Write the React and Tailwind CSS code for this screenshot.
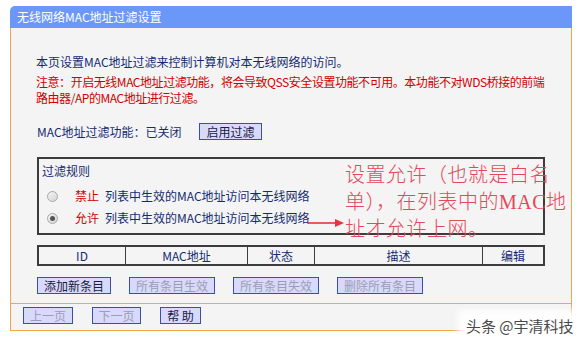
const FONT = { fontFamily: '"Noto Sans CJK SC", "Liberation Sans", sans-serif' }

function Btn({ children, disabled, w }) {
  return (
    <div
      className={`${w} h-[17px] flex items-center justify-center border border-[#3a4fa6] bg-[#d9d9fb] text-[12px] leading-none ${
        disabled ? 'text-[#9c9cb4]' : 'text-[#1a1a40]'
      }`}
    >
      {children}
    </div>
  )
}

function Radio({ checked }) {
  return (
    <span className="w-[11px] h-[11px] rounded-full border border-[#a8a8a8] bg-gradient-to-br from-[#f4f4f4] to-[#d6d6d6] flex items-center justify-center flex-shrink-0">
      {checked && <span className="w-[5px] h-[5px] rounded-full bg-[#555]" />}
    </span>
  )
}

export default function App() {
  return (
    <div className="relative w-[582px] h-[343px] bg-white overflow-hidden" style={FONT}>
      <div className="pt-[6px] pl-[10px] w-[572px]">
        {/* Title */}
        <div className="h-[22px] bg-[#6b97f8] rounded-tl-[5px] text-white text-[12px] leading-[22px] pl-[7px]">
          无线网络MAC地址过滤设置
        </div>

        <div className="bg-[#f4f4f4] border-x border-b border-[#f3a64c]">
          {/* Upper section */}
          <div className="pl-[25px] pr-[25px] pt-[26px] pb-[9px] border-b border-[#f3a64c] text-[12px]">
            <p className="leading-[16px] text-[#142c72] whitespace-nowrap">本页设置MAC地址过滤来控制计算机对本无线网络的访问。</p>
            <p className="mt-[4px] leading-[16px] text-[#d10000] whitespace-nowrap tracking-[-0.45px]">
              注意：开启无线MAC地址过滤功能，将会导致QSS安全设置功能不可用。本功能不对WDS桥接的前端
              <br />
              路由器/AP的MAC地址进行过滤。
            </p>

            <div className="mt-[17px] h-[17px] flex items-center text-[#142c72]">
              <span className="w-[163px] pl-[1px]">MAC地址过滤功能：已关闭</span>
              <Btn w="w-[63px]">启用过滤</Btn>
            </div>

            {/* Filter rules */}
            <div className="mt-[17px] ml-[1px] w-[508px] h-[78px] border-2 border-[#3c3c3c] pt-[4px]">
              <div className="pl-[3px] leading-[16px] text-[#142c72]">过滤规则</div>
              <div className="mt-[9px] h-[16px] flex items-center pl-[8px]">
                <Radio />
                <span className="ml-[17px] text-[#d10000]">禁止</span>
                <span className="ml-[6px] text-[#142c72]">列表中生效的MAC地址访问本无线网络</span>
              </div>
              <div className="mt-[6px] h-[16px] flex items-center pl-[8px]">
                <Radio checked />
                <span className="ml-[17px] text-[#d10000]">允许</span>
                <span className="ml-[6px] text-[#142c72]">列表中生效的MAC地址访问本无线网络</span>
              </div>
            </div>

            {/* Table header */}
            <div className="mt-[10px] ml-[1px] w-[508px] h-[21px] border-2 border-[#3c3c3c] grid grid-cols-[87px_122px_67px_168px_1fr] text-[#142c72] leading-[17px]">
              <div className="text-center border-r border-[#3c3c3c]">ID</div>
              <div className="text-center border-r border-[#3c3c3c]">MAC地址</div>
              <div className="text-center border-r border-[#3c3c3c]">状态</div>
              <div className="text-center border-r border-[#3c3c3c]">描述</div>
              <div className="text-center">编辑</div>
            </div>

            {/* Action buttons */}
            <div className="mt-[11px] ml-[1px] flex gap-[18px]">
              <Btn w="w-[74px]">添加新条目</Btn>
              <Btn w="w-[86px]" disabled>所有条目生效</Btn>
              <Btn w="w-[86px]" disabled>所有条目失效</Btn>
              <Btn w="w-[86px]" disabled>删除所有条目</Btn>
            </div>
          </div>

          {/* Lower section */}
          <div className="pl-[12px] pt-[3px] pb-[6px] flex gap-[19px]">
            <Btn w="w-[50px]" disabled>上一页</Btn>
            <Btn w="w-[49px]" disabled>下一页</Btn>
            <Btn w="w-[41px]">帮 助</Btn>
          </div>
        </div>
      </div>

      {/* Annotation */}
      <div
        className="absolute left-[345px] top-[162px] text-[20px] leading-[27px] text-[#e5475b] font-light tracking-[0.5px] whitespace-nowrap"
        style={{ fontFamily: '"Liberation Serif", "Noto Sans CJK SC", serif' }}
      >
        设置允许（也就是白名
        <br />
        单），在列表中的MAC地
        <br />
        址才允许上网。
      </div>
      <svg className="absolute left-[307px] top-[218px]" width="38" height="10" viewBox="0 0 38 10">
        <line x1="1" y1="5" x2="30" y2="5" stroke="#e8323c" strokeWidth="1.6" />
        <polygon points="28,1 37,5 28,9" fill="#e8323c" />
      </svg>

      {/* Watermark */}
      <div className="absolute left-[458px] top-[310px] w-[124px] h-[33px] bg-white/90 blur-[3px]" />
      <div className="absolute left-[466px] top-[316px] text-[15px] leading-[20px] text-[#4a4a4a] whitespace-nowrap">
        头条 @宇清科技
      </div>
    </div>
  )
}
